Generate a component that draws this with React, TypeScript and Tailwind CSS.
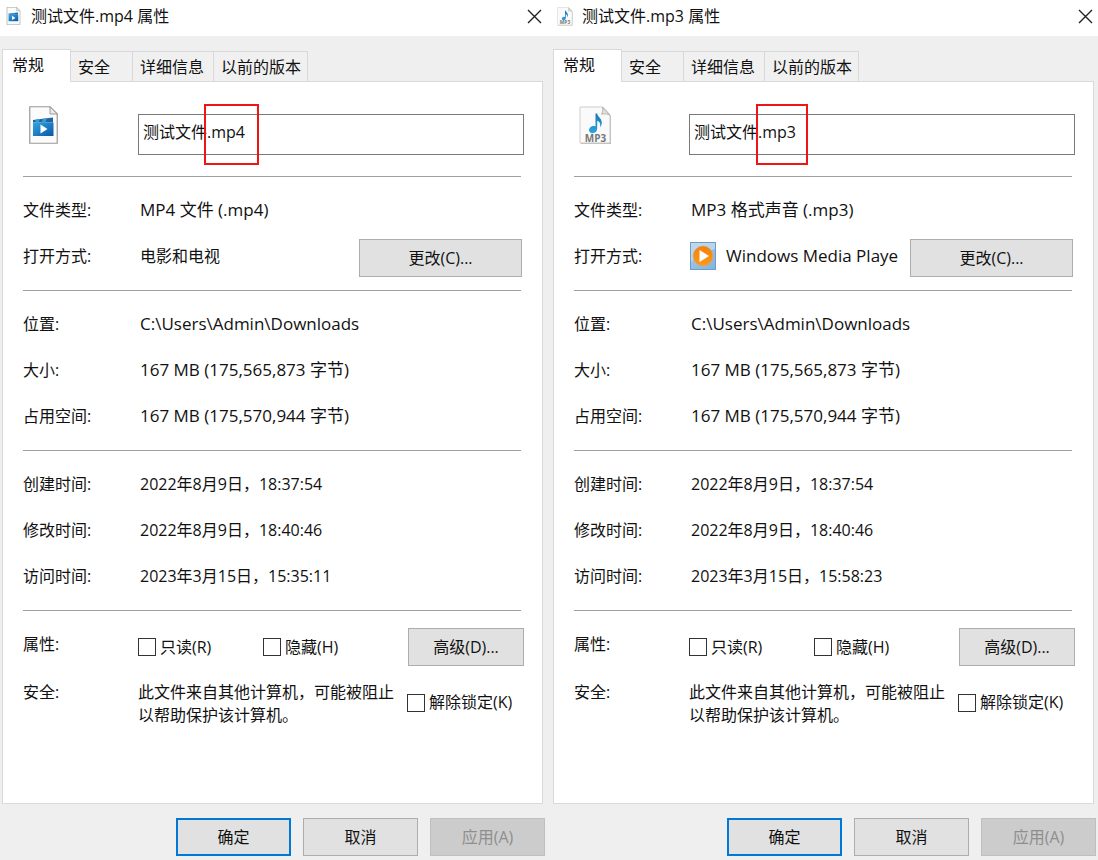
import { useState, type ReactNode } from "react";

type FileKind = "mp4" | "mp3";

type FileInfo = {
  kind: FileKind;
  name: string;
  type: string;
  openWith: string;
  accessed: string;
};

const files: FileInfo[] = [
  {
    kind: "mp4",
    name: "测试文件.mp4",
    type: "MP4 文件 (.mp4)",
    openWith: "电影和电视",
    accessed: "2023年3月15日，15:35:11",
  },
  {
    kind: "mp3",
    name: "测试文件.mp3",
    type: "MP3 格式声音 (.mp3)",
    openWith: "Windows Media Playe",
    accessed: "2023年3月15日，15:58:23",
  },
];

const tabs = [
  { label: "安全", width: "w-[62px]" },
  { label: "详细信息", width: "w-[81px]" },
  { label: "以前的版本", width: "w-[94px]" },
];

function VideoFileIcon({ className }: { className: string }) {
  return (
    <svg viewBox="0 0 29 38" className={className} aria-hidden="true">
      <defs>
        <linearGradient id="film" x1="0" y1="0" x2="1" y2="1">
          <stop offset="0" stopColor="#35a5e0" />
          <stop offset="0.5" stopColor="#1c7fc6" />
          <stop offset="1" stopColor="#0c56a4" />
        </linearGradient>
      </defs>
      <path d="M.75.75H21L28.25 8v29.25H.75z" fill="#fbfbfb" stroke="#999" strokeWidth="1.2" />
      <path d="M21 .75V8h7.25z" fill="#ececec" stroke="#999" />
      <path d="M4 14l20-2.500v5H4z" fill="#1b66a3" />
      <path d="M7 13.600l4-.5-1.500 3.400H6zM14 12.800l4-.5-1.500 4.200h-4z" fill="#3a9bd3" />
      <path d="M4 16.500h20.500V30H4z" fill="url(#film)" />
      <path d="M11.500 18.500l7 4.500-7 4.500z" fill="#fff" />
    </svg>
  );
}

function AudioFileIcon({ className }: { className: string }) {
  return (
    <svg viewBox="0 0 33 39" className={className} aria-hidden="true">
      <defs>
        <linearGradient id="note" x1="0" y1="0" x2="0" y2="1">
          <stop offset="0" stopColor="#1678b8" />
          <stop offset="1" stopColor="#2aa5de" />
        </linearGradient>
      </defs>
      <path d="M2 2h23l7 8v28H2z" fill="#b9b9b9" />
      <path d="M1 1h22.500L31 9v28H1z" fill="#fafafa" stroke="#cdcdcd" />
      <path d="M23.500 1c.8 3-.2 6-1 7.200 2.500-.6 6-.4 8.500.8z" fill="#e2dfdc" stroke="#aaa5a2" strokeWidth=".8" />
      <path
        d="M16.500 7.500h1.700c.3 3.500 4.800 4.800 4.600 9.500-.1 2-.8 3.300-1.800 4.300.8-3.300.1-5.500-2.800-6.500v7.700c0 2.800-2 4.700-4.600 4.700-2.100 0-3.600-1.200-3.600-3.100 0-2.300 2.200-4.100 4.700-4.100.7 0 1.300.1 1.800.4z"
        fill="url(#note)"
      />
      <text x="16.500" y="35.500" textAnchor="middle" fontFamily="Open Sans, sans-serif" fontSize="10" fontWeight="700" fill="#777">
        MP3
      </text>
    </svg>
  );
}

function MediaPlayerIcon() {
  return (
    <svg viewBox="0 0 26 28" className="h-7 w-[26px] shrink-0" aria-hidden="true">
      <defs>
        <linearGradient id="tile" x1="0" y1="0" x2="1" y2="1">
          <stop offset="0" stopColor="#a9cdeb" />
          <stop offset="1" stopColor="#7fb3e0" />
        </linearGradient>
        <linearGradient id="disc" x1="0" y1="0" x2="0" y2="1">
          <stop offset="0" stopColor="#f2810f" />
          <stop offset="1" stopColor="#fb9a1c" />
        </linearGradient>
      </defs>
      <rect x=".5" y=".5" width="25" height="27" fill="url(#tile)" stroke="#6c9cc9" />
      <path d="M1 1h24v6C17 9 9 13 1 20z" fill="#c6def2" opacity=".7" />
      <circle cx="13" cy="14" r="10" fill="url(#disc)" stroke="#e9a65c" strokeWidth=".6" />
      <path d="M9.500 8l9.500 6-9.500 6z" fill="#fff" />
    </svg>
  );
}

function FileIcon({ kind, small }: { kind: FileKind; small?: boolean }) {
  if (kind === "mp4") {
    return <VideoFileIcon className={small ? "h-[18px] w-[15px]" : "ml-px h-[38px] w-[29px]"} />;
  }
  return <AudioFileIcon className={small ? "h-[19px] w-4" : "h-[39px] w-[33px]"} />;
}

function Row({ label, children }: { label: string; children: ReactNode }) {
  return (
    <div className="flex h-[46px] items-center pb-[3px]">
      <dt className="w-[117px] shrink-0">{label}</dt>
      <dd className="flex min-w-0 flex-1 items-center">{children}</dd>
    </div>
  );
}

function Group({ children }: { children: ReactNode }) {
  return <dl className="mr-[3px] border-t border-[#a0a0a0] pt-[11px] pb-[10px]">{children}</dl>;
}

function Check({ label }: { label: string }) {
  return (
    <label className="flex items-center gap-1 whitespace-nowrap">
      <input type="checkbox" className="size-[18px] shrink-0 appearance-none border border-[#333] bg-white checked:bg-[#0078d7]" />
      {label}
    </label>
  );
}

function PropertiesWindow({ file }: { file: FileInfo }) {
  const [name, setName] = useState(file.name);

  return (
    <section className="flex min-w-0 flex-col bg-[#efefef]">
      <header className="flex h-9 items-center bg-white pr-[5px] pb-1 pl-[6px] shadow-[4px_0_0_#fff]">
        <div className="flex w-[25px] shrink-0">
          <FileIcon kind={file.kind} small />
        </div>
        <h1 className="flex-1">{file.name} 属性</h1>
        <button type="button" aria-label="关闭" className="flex size-[15px] items-center justify-center">
          <svg viewBox="0 0 15 15" className="size-[15px]" aria-hidden="true">
            <path d="M1 1l13 13M14 1L1 14" stroke="#222" strokeWidth="1.400" fill="none" />
          </svg>
        </button>
      </header>

      <div className="flex flex-1 flex-col pt-[13px] pr-1 pl-[2px]">
        <div role="tablist" className="flex items-end">
          <button
            type="button"
            role="tab"
            aria-selected="true"
            className="relative z-10 -mb-px flex h-[33px] w-[69px] items-start border border-b-0 border-[#d9d9d9] bg-white pt-[3px] pl-[9px]"
          >
            常规
          </button>
          {tabs.map((tab) => (
            <button
              key={tab.label}
              type="button"
              role="tab"
              aria-selected="false"
              className={`flex h-[30px] items-center border-t border-r border-[#d9d9d9] bg-[#f0f0f0] pl-[7px] whitespace-nowrap ${tab.width}`}
            >
              {tab.label}
            </button>
          ))}
        </div>

        <div role="tabpanel" className="flex flex-1 flex-col border border-[#d9d9d9] bg-white pr-[18px] pl-5">
          <div className="flex h-[94px] pt-6">
            <div className="flex w-[115px] shrink-0 pl-[5px]">
              <FileIcon kind={file.kind} />
            </div>
            <div className="relative mt-2 h-[41px] min-w-0 flex-1">
              <input
                aria-label="文件名"
                value={name}
                onChange={(e) => setName(e.target.value)}
                className="h-[41px] w-full border border-[#7a7a7a] bg-white pb-2 pl-1 outline-none"
              />
              <span
                aria-hidden="true"
                className={`pointer-events-none absolute -top-[10px] h-[61px] border-2 border-[#ee1515] ${
                  file.kind === "mp4" ? "left-[66px] w-[55px]" : "left-[67px] w-[52px]"
                }`}
              />
            </div>
          </div>

          <Group>
            <Row label="文件类型:">
              <span className="text-[17px]">{file.type}</span>
            </Row>
            <Row label="打开方式:">
              {file.kind === "mp3" && (
                <span className="-ml-px flex w-9 shrink-0">
                  <MediaPlayerIcon />
                </span>
              )}
              <span className={`flex-1 whitespace-nowrap ${file.kind === "mp3" ? "text-[17px]" : ""}`}>{file.openWith}</span>
              <button type="button" className="-mr-px mt-1 h-[38px] w-[163px] shrink-0 border border-[#adadad] bg-[#e1e1e1]">
                更改(C)...
              </button>
            </Row>
          </Group>
          <Group>
            <Row label="位置:">
              <span className="text-[17px]">C:\Users\Admin\Downloads</span>
            </Row>
            <Row label="大小:">
              <span className="text-[17px]">167 MB (175,565,873 字节)</span>
            </Row>
            <Row label="占用空间:">
              <span className="text-[17px]">167 MB (175,570,944 字节)</span>
            </Row>
          </Group>
          <Group>
            <Row label="创建时间:">2022年8月9日，18:37:54</Row>
            <Row label="修改时间:">2022年8月9日，18:40:46</Row>
            <Row label="访问时间:">{file.accessed}</Row>
          </Group>

          <div className="mr-[3px] border-t border-[#a0a0a0]" />
          <div className="flex pt-[17px]">
            <div className="w-[115px] shrink-0 pt-1">属性:</div>
            <div className="flex flex-1 items-center">
              <div className="w-[125px] shrink-0">
                <Check label="只读(R)" />
              </div>
              <Check label="隐藏(H)" />
            </div>
            <button type="button" className="h-[38px] w-[116px] shrink-0 border border-[#adadad] bg-[#e1e1e1]">
              高级(D)...
            </button>
          </div>
          <div className="flex pt-[15px] leading-[23px]">
            <div className="w-[115px] shrink-0">安全:</div>
            <p className="flex-1">
              此文件来自其他计算机，可能被阻止
              <br />
              以帮助保护该计算机。
            </p>
            <div className="w-[117px] shrink-0 pt-[10px]">
              <Check label="解除锁定(K)" />
            </div>
          </div>
        </div>

        <footer className="-mr-[2px] flex h-[56px] justify-end gap-3 pt-[14px]">
          <button type="button" className="h-[38px] w-[115px] border-2 border-[#0078d7] bg-[#e1e1e1]">
            确定
          </button>
          <button type="button" className="h-[38px] w-[115px] border border-[#adadad] bg-[#e1e1e1]">
            取消
          </button>
          <button type="button" disabled className="h-[38px] w-[115px] border border-[#bfbfbf] bg-[#cccccc] text-[#8e8e8e]">
            应用(A)
          </button>
        </footer>
      </div>
    </section>
  );
}

export default function App() {
  return (
    <main
      lang="zh-CN"
      className="grid min-h-screen grid-cols-2 gap-1 overflow-hidden bg-[#efefef] font-['Open_Sans','Noto_Sans_CJK_SC',sans-serif] text-base leading-6 text-[#111]"
    >
      {files.map((file) => (
        <PropertiesWindow key={file.kind} file={file} />
      ))}
    </main>
  );
}
